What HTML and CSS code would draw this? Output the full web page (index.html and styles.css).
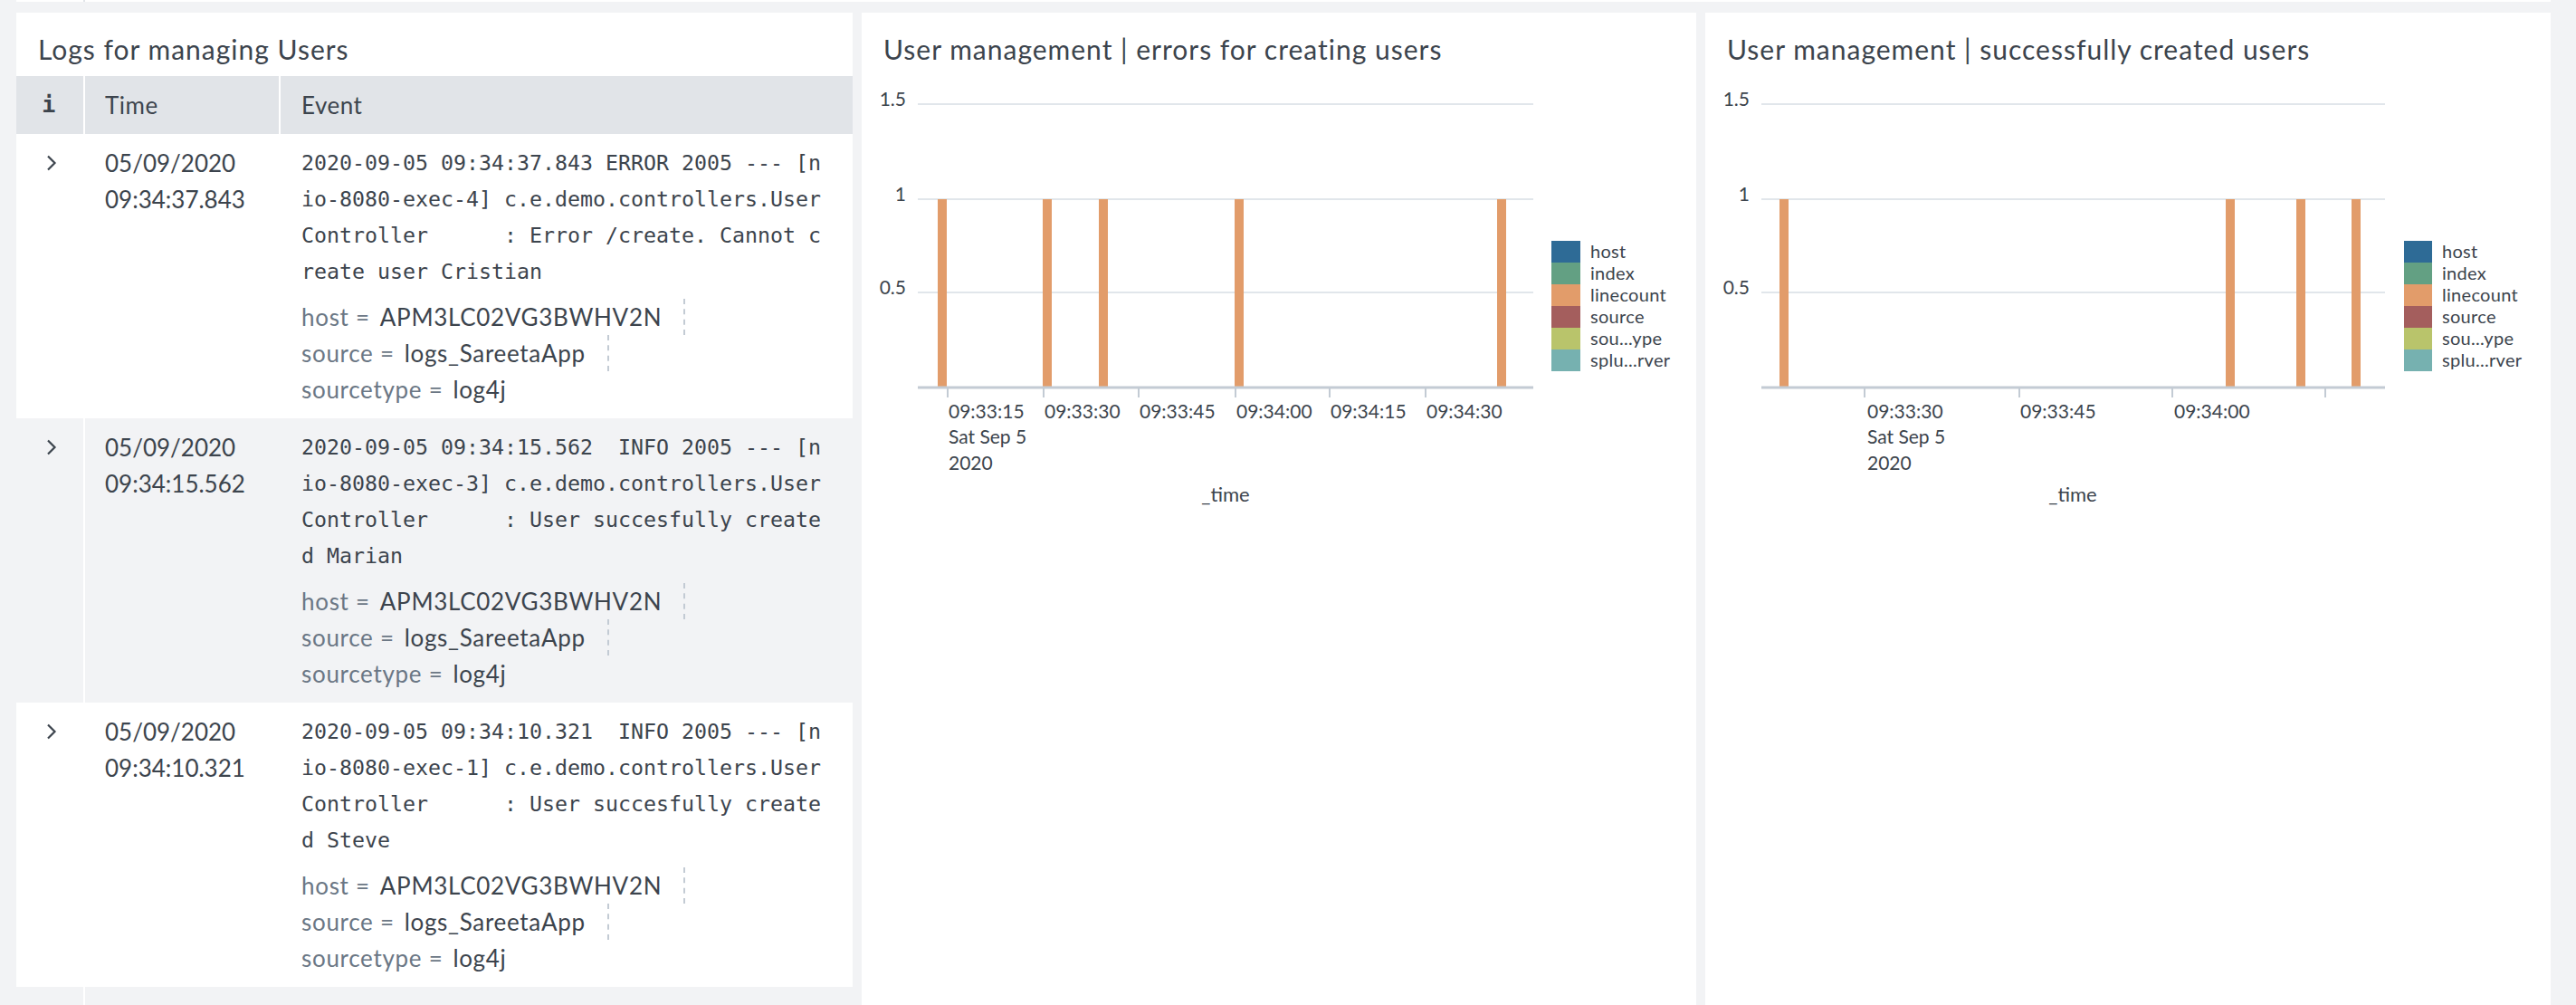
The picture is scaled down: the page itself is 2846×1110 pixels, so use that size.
FILE: index.html
```html
<!DOCTYPE html>
<html lang="en">
<head>
<meta charset="utf-8">
<title>User management dashboard</title>
<link rel="stylesheet" href="styles.css">
</head>
<body>
<div class="top-strip"><span class="top-sep"></span></div>
<main class="dashboard">
  <section class="panel panel-events">
    <h2 class="panel-title">Logs for managing Users</h2>
    <div class="events">
      <div class="ev-head">
        <div class="h-info">i</div>
        <div class="h-time">Time</div>
        <div class="h-event">Event</div>
      </div>

      <div class="ev-row">
        <div class="c-expand"><svg class="chev" viewBox="0 0 12 18" width="12" height="18"><path d="M2 1.5 L9.5 9 L2 16.5" fill="none" stroke="#3c444d" stroke-width="2.2"/></svg></div>
        <div class="c-time"><div>05/09/2020</div><div>09:34:37.843</div></div>
        <div class="c-event">
          <div class="raw"><div>2020-09-05 09:34:37.843 ERROR 2005 --- [n</div><div>io-8080-exec-4] c.e.demo.controllers.User</div><div>Controller      : Error /create. Cannot c</div><div>reate user Cristian</div></div>
          <div class="fields">
            <div class="field"><span class="k">host =</span><span class="v dashed">APM3LC02VG3BWHV2N</span></div>
            <div class="field"><span class="k">source =</span><span class="v dashed">logs_SareetaApp</span></div>
            <div class="field"><span class="k">sourcetype =</span><span class="v">log4j</span></div>
          </div>
        </div>
      </div>

      <div class="ev-row striped">
        <div class="c-expand"><svg class="chev" viewBox="0 0 12 18" width="12" height="18"><path d="M2 1.5 L9.5 9 L2 16.5" fill="none" stroke="#3c444d" stroke-width="2.2"/></svg></div>
        <div class="c-time"><div>05/09/2020</div><div>09:34:15.562</div></div>
        <div class="c-event">
          <div class="raw"><div>2020-09-05 09:34:15.562  INFO 2005 --- [n</div><div>io-8080-exec-3] c.e.demo.controllers.User</div><div>Controller      : User succesfully create</div><div>d Marian</div></div>
          <div class="fields">
            <div class="field"><span class="k">host =</span><span class="v dashed">APM3LC02VG3BWHV2N</span></div>
            <div class="field"><span class="k">source =</span><span class="v dashed">logs_SareetaApp</span></div>
            <div class="field"><span class="k">sourcetype =</span><span class="v">log4j</span></div>
          </div>
        </div>
      </div>

      <div class="ev-row">
        <div class="c-expand"><svg class="chev" viewBox="0 0 12 18" width="12" height="18"><path d="M2 1.5 L9.5 9 L2 16.5" fill="none" stroke="#3c444d" stroke-width="2.2"/></svg></div>
        <div class="c-time"><div>05/09/2020</div><div>09:34:10.321</div></div>
        <div class="c-event">
          <div class="raw"><div>2020-09-05 09:34:10.321  INFO 2005 --- [n</div><div>io-8080-exec-1] c.e.demo.controllers.User</div><div>Controller      : User succesfully create</div><div>d Steve</div></div>
          <div class="fields">
            <div class="field"><span class="k">host =</span><span class="v dashed">APM3LC02VG3BWHV2N</span></div>
            <div class="field"><span class="k">source =</span><span class="v dashed">logs_SareetaApp</span></div>
            <div class="field"><span class="k">sourcetype =</span><span class="v">log4j</span></div>
          </div>
        </div>
      </div>

      <div class="ev-row striped filler">
        <div class="c-expand"></div>
        <div class="c-time"></div>
        <div class="c-event"></div>
      </div>
    </div>
  </section>

  <section class="panel panel-chart">
    <h2 class="panel-title">User management | errors for creating users</h2>
    <svg class="chart" width="922" height="1026" viewBox="0 0 922 1026">
      <g transform="translate(-952 -84)">
        <g class="grid">
          <line x1="1014" y1="115" x2="1694" y2="115"/>
          <line x1="1014" y1="220" x2="1694" y2="220"/>
          <line x1="1014" y1="323" x2="1694" y2="323"/>
        </g>
        <g class="ylab">
          <text x="1001" y="117">1.5</text>
          <text x="1001" y="222">1</text>
          <text x="1001" y="325">0.5</text>
        </g>
        <g class="bars">
          <rect x="1036" y="220" width="10" height="207"/>
          <rect x="1152" y="220" width="10" height="207"/>
          <rect x="1214" y="220" width="10" height="207"/>
          <rect x="1364" y="220" width="10" height="207"/>
          <rect x="1654" y="220" width="10" height="207"/>
        </g>
        <line class="axis" x1="1014" y1="428" x2="1694" y2="428"/>
        <g class="ticks">
          <line x1="1047" y1="429" x2="1047" y2="439"/>
          <line x1="1153" y1="429" x2="1153" y2="439"/>
          <line x1="1258" y1="429" x2="1258" y2="439"/>
          <line x1="1365" y1="429" x2="1365" y2="439"/>
          <line x1="1469" y1="429" x2="1469" y2="439"/>
          <line x1="1575" y1="429" x2="1575" y2="439"/>
        </g>
        <g class="xlab">
          <text x="1048" y="462">09:33:15</text>
          <text x="1048" y="490">Sat Sep 5</text>
          <text x="1048" y="519">2020</text>
          <text x="1154" y="462">09:33:30</text>
          <text x="1259" y="462">09:33:45</text>
          <text x="1366" y="462">09:34:00</text>
          <text x="1470" y="462">09:34:15</text>
          <text x="1576" y="462">09:34:30</text>
        </g>
        <text class="xtitle" x="1354" y="554">_time</text>
        <g class="legend">
          <rect x="1714" y="266" width="32" height="24" fill="#2e6b96"/>
          <rect x="1714" y="290" width="32" height="24" fill="#63a083"/>
          <rect x="1714" y="314" width="32" height="24" fill="#e29c6a"/>
          <rect x="1714" y="338" width="32" height="24" fill="#a45e5d"/>
          <rect x="1714" y="362" width="32" height="24" fill="#b9c46b"/>
          <rect x="1714" y="386" width="32" height="24" fill="#76b1b0"/>
          <text x="1757" y="285">host</text>
          <text x="1757" y="309">index</text>
          <text x="1757" y="333">linecount</text>
          <text x="1757" y="357">source</text>
          <text x="1757" y="381">sou...ype</text>
          <text x="1757" y="405">splu...rver</text>
        </g>
      </g>
    </svg>
  </section>

  <section class="panel panel-chart">
    <h2 class="panel-title">User management | successfully created users</h2>
    <svg class="chart" width="934" height="1026" viewBox="0 0 934 1026">
      <g transform="translate(-1884 -84)">
        <g class="grid">
          <line x1="1946" y1="115" x2="2635" y2="115"/>
          <line x1="1946" y1="220" x2="2635" y2="220"/>
          <line x1="1946" y1="323" x2="2635" y2="323"/>
        </g>
        <g class="ylab">
          <text x="1933" y="117">1.5</text>
          <text x="1933" y="222">1</text>
          <text x="1933" y="325">0.5</text>
        </g>
        <g class="bars">
          <rect x="1966" y="220" width="10" height="207"/>
          <rect x="2459" y="220" width="10" height="207"/>
          <rect x="2537" y="220" width="10" height="207"/>
          <rect x="2598" y="220" width="10" height="207"/>
        </g>
        <line class="axis" x1="1946" y1="428" x2="2635" y2="428"/>
        <g class="ticks">
          <line x1="2060" y1="429" x2="2060" y2="439"/>
          <line x1="2231" y1="429" x2="2231" y2="439"/>
          <line x1="2400" y1="429" x2="2400" y2="439"/>
          <line x1="2569" y1="429" x2="2569" y2="439"/>
        </g>
        <g class="xlab">
          <text x="2063" y="462">09:33:30</text>
          <text x="2063" y="490">Sat Sep 5</text>
          <text x="2063" y="519">2020</text>
          <text x="2232" y="462">09:33:45</text>
          <text x="2402" y="462">09:34:00</text>
        </g>
        <text class="xtitle" x="2290" y="554">_time</text>
        <g class="legend">
          <rect x="2656" y="266" width="31" height="24" fill="#2e6b96"/>
          <rect x="2656" y="290" width="31" height="24" fill="#63a083"/>
          <rect x="2656" y="314" width="31" height="24" fill="#e29c6a"/>
          <rect x="2656" y="338" width="31" height="24" fill="#a45e5d"/>
          <rect x="2656" y="362" width="31" height="24" fill="#b9c46b"/>
          <rect x="2656" y="386" width="31" height="24" fill="#76b1b0"/>
          <text x="2698" y="285">host</text>
          <text x="2698" y="309">index</text>
          <text x="2698" y="333">linecount</text>
          <text x="2698" y="357">source</text>
          <text x="2698" y="381">sou...ype</text>
          <text x="2698" y="405">splu...rver</text>
        </g>
      </g>
    </svg>
  </section>
</main>
</body>
</html>
```
FILE: styles.css
```css
html, body {
  margin: 0;
  padding: 0;
  height: 1110px;
  overflow: hidden;
  background: #f2f3f5;
  font-family: "Lato", "Open Sans", sans-serif;
  color: #3c444d;
}

.top-strip {
  margin-left: 18px;
  width: 2800px;
  height: 2px;
  background: #ffffff;
}
.top-sep {
  display: block;
  margin-left: 74px;
  width: 2px;
  height: 2px;
  background: #e1e4e8;
}

.dashboard {
  display: grid;
  grid-template-columns: 924px 922px 934px;
  column-gap: 10px;
  padding: 12px 0 0 18px;
  align-items: start;
}

.panel {
  background: #ffffff;
  min-height: 1200px;
}
.panel-events {
  background: transparent;
}

.panel-title {
  margin: 0;
  padding: 22px 24px 12px;
  height: 36px;
  line-height: 36px;
  font-size: 30px;
  font-weight: 400;
  letter-spacing: 1px;
  color: #3c444d;
  background: #ffffff;
  white-space: nowrap;
}

.events {
  display: flex;
  flex-direction: column;
}

.ev-head {
  display: grid;
  grid-template-columns: 74px 216px 1fr;
  height: 64px;
  background: #e1e4e8;
  font-size: 26px;
  line-height: 64px;
  letter-spacing: 0.5px;
}
.h-info {
  text-align: center;
  font-family: "DejaVu Sans Mono", monospace;
  font-weight: 700;
  font-size: 25px;
  padding-right: 2px;
}
.h-time {
  border-left: 2px solid #ffffff;
  padding-left: 22px;
}
.h-event {
  border-left: 2px solid #ffffff;
  padding-left: 23px;
}

.ev-row {
  display: grid;
  grid-template-columns: 74px 216px 1fr;
  background: #ffffff;
  height: 314px;
}
.ev-row.striped {
  background: #f2f3f5;
}
.ev-row.filler {
  height: 120px;
}

.c-expand {
  padding-top: 12px;
  height: 40px;
  display: flex;
  align-items: center;
  justify-content: center;
  padding-left: 4px;
}
.chev {
  display: block;
}

.c-time {
  border-left: 2px solid #ffffff;
  padding: 12px 0 0 22px;
  font-size: 26px;
  line-height: 40px;
}

.c-event {
  padding: 12px 0 0 25px;
}

.raw {
  font-family: "DejaVu Sans Mono", "Liberation Mono", monospace;
  font-size: 23.25px;
  line-height: 40px;
  white-space: pre;
}

.fields {
  margin-top: 10px;
  font-size: 26px;
  line-height: 40px;
  letter-spacing: 0.7px;
}
.field {
  display: flex;
  height: 40px;
}
.k {
  color: #6b7785;
  margin-right: 11px;
}
.v {
  color: #3c444d;
}
.v.dashed {
  padding-right: 24px;
  border-right: 2px dashed #c3cbd4;
}

.chart {
  display: block;
}
.grid line {
  stroke: #e1e6eb;
  stroke-width: 2;
}
.axis {
  stroke: #c3cbd4;
  stroke-width: 3;
}
.ticks line {
  stroke: #c3cbd4;
  stroke-width: 2;
}
.bars rect {
  fill: #e29c6a;
}
.ylab text {
  font-family: "Lato", sans-serif;
  font-size: 21px;
  fill: #3c444d;
  text-anchor: end;
}
.xlab text {
  font-family: "Lato", sans-serif;
  font-size: 21px;
  fill: #3c444d;
}
.xtitle {
  font-family: "Lato", sans-serif;
  font-size: 22px;
  fill: #3c444d;
  text-anchor: middle;
}
.legend text {
  font-family: "Lato", sans-serif;
  font-size: 20px;
  letter-spacing: 0.3px;
  fill: #3c444d;
}
```
